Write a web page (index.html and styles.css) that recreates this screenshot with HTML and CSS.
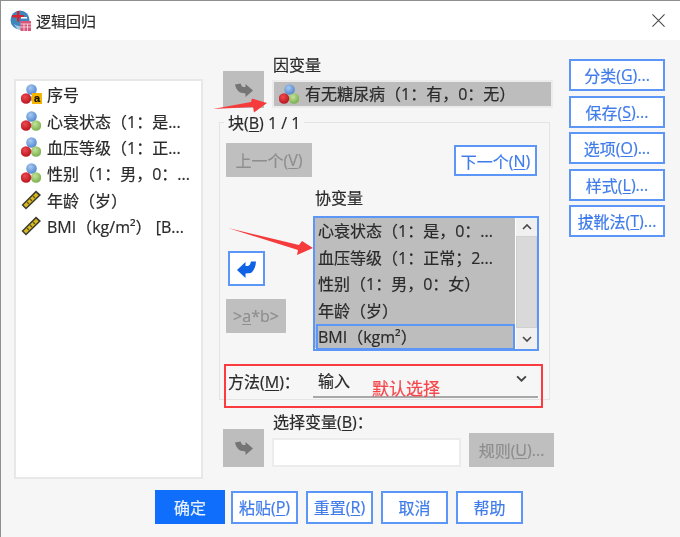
FILE: index.html
```html
<!DOCTYPE html>
<html lang="zh">
<head>
<meta charset="utf-8">
<title>逻辑回归</title>
<link rel="stylesheet" href="styles.css">
</head>
<body>
<svg width="0" height="0" class="defs">
  <defs>
    <radialGradient id="gb" cx=".4" cy=".35" r=".7"><stop offset="0" stop-color="#a9c9ef"/><stop offset="1" stop-color="#4c84cf"/></radialGradient>
    <radialGradient id="gg" cx=".4" cy=".35" r=".7"><stop offset="0" stop-color="#c4e29b"/><stop offset="1" stop-color="#76ad48"/></radialGradient>
    <radialGradient id="gr" cx=".4" cy=".35" r=".7"><stop offset="0" stop-color="#ee4a50"/><stop offset="1" stop-color="#b5121e"/></radialGradient>
    <symbol id="nominal" viewBox="0 0 20 20">
      <circle cx="10.500" cy="5.500" r="5.300" fill="url(#gb)"/>
      <circle cx="15" cy="14.500" r="5.200" fill="url(#gg)"/>
      <circle cx="5" cy="14.500" r="5.200" fill="url(#gr)"/>
    </symbol>
    <symbol id="ruler" viewBox="0 0 20 20">
      <path d="M0.500 15 L15 0.500 L20 5 L5 19.500 Z" fill="#3b3b2e"/>
      <path d="M2.500 15 L15 2.800 L17.600 5.200 L5 17.400 Z" fill="#d9b81e"/>
      <path d="M6 12 l2 2 M9 9 l2 2 M12 6 l2 2" stroke="#5a5320" stroke-width="1.200"/>
    </symbol>
    <symbol id="arrow-right" viewBox="0 0 18 14">
      <path d="M18 7.500 L10.500 1 L10.500 4 L8 4 Q6.500 3.500 5.500 .5 L0 1.500 Q1 7 5 9.500 L10.500 10.500 L10.500 14 Z" fill="#757575"/>
    </symbol>
    <symbol id="arrow-left" viewBox="0 0 19 18">
      <path d="M0 10 L8.500 2 L8.500 6 L11 6 Q13 5.500 14 1.500 L19 1.500 Q18.500 9.500 14 13 L8.500 13.500 L8.500 18 Z" fill="#0f62e6"/>
    </symbol>
  </defs>
</svg>

<div class="window">
  <header class="titlebar">
    <svg class="app-icon" viewBox="0 0 22 22" aria-hidden="true">
      <circle cx="10" cy="10" r="9.500" fill="#3f86bd"/>
      <path d="M4 14 Q10 19 17 12 L17 19 L7 19 Z" fill="#9cc6e2"/>
      <path d="M7 1 h2.400 v4 h4.400 v2.400 h-4.400 v4 h-2.400 v-4 h-5 v-2.400 h5 Z" fill="#d6232f"/>
      <rect x="10.500" y="11" width="10.500" height="10" fill="#d9567a"/>
      <path d="M10.500 14 h10.500 M10.500 17 h10.500 M14 14 v7 M17.500 14 v7" stroke="#f7d5df" stroke-width=".9"/>
      <path d="M11 7 h6 v1.600 h-6 Z" fill="#ffffff"/>
    </svg>
    <span class="title-text">逻辑回归</span>
    <svg class="close" viewBox="0 0 14 14" aria-hidden="true"><path d="M.5 .5 L13.500 13.500 M13.500 .5 L.5 13.500" stroke="#444" stroke-width="1.100"/></svg>
  </header>

  <main class="content">
    <ul class="sources">
      <li class="src-row"><span class="icon-wrap"><svg class="vicon"><use href="#nominal"/></svg><b class="a-tag">a</b></span>序号</li>
      <li class="src-row"><span class="icon-wrap"><svg class="vicon"><use href="#nominal"/></svg></span>心衰状态（1：是...</li>
      <li class="src-row"><span class="icon-wrap"><svg class="vicon"><use href="#nominal"/></svg></span>血压等级（1：正...</li>
      <li class="src-row"><span class="icon-wrap"><svg class="vicon"><use href="#nominal"/></svg></span>性别（1：男，0：...</li>
      <li class="src-row"><span class="icon-wrap"><svg class="vicon"><use href="#ruler"/></svg></span>年龄（岁）</li>
      <li class="src-row"><span class="icon-wrap"><svg class="vicon"><use href="#ruler"/></svg></span>BMI（kg/m²） [B...</li>
    </ul>

    <section class="center">
      <div class="dep">
        <button class="move move-dep"><svg class="move-arrow"><use href="#arrow-right"/></svg></button>
        <div class="dep-col">
          <div class="label">因变量</div>
          <div class="dep-box">
            <div class="dep-inner"><svg class="vicon"><use href="#nominal"/></svg><span>有无糖尿病（1：有，0：无）</span></div>
          </div>
        </div>
      </div>

      <div class="group">
        <div class="legend">块(<u>B</u>) 1 / 1</div>
        <div class="nav-row">
          <button class="btn-disabled btn-prev">上一个(<u>V</u>)</button>
          <button class="btn btn-next">下一个(<u>N</u>)</button>
        </div>
        <div class="cov">
          <div class="cov-tools">
            <button class="move-active"><svg class="move-arrow-b"><use href="#arrow-left"/></svg></button>
            <button class="btn-disabled btn-ab">&gt;<u>a</u>*b&gt;</button>
          </div>
          <div class="cov-main">
            <div class="label">协变量</div>
            <div class="listbox">
              <ul class="cov-list">
                <li class="cov-row">心衰状态（1：是，0：...</li>
                <li class="cov-row">血压等级（1：正常；2...</li>
                <li class="cov-row">性别（1：男，0：女）</li>
                <li class="cov-row">年龄（岁）</li>
                <li class="cov-row cov-selected">BMI（kgm²）</li>
              </ul>
              <div class="scrollbar">
                <div class="sb-btn sb-up"><svg class="chev-s" viewBox="0 0 10 6"><path d="M1 5 L5 1 L9 5" fill="none" stroke="#444" stroke-width="1.600"/></svg></div>
                <div class="sb-track"></div>
                <div class="sb-btn sb-down"><svg class="chev-s" viewBox="0 0 10 6"><path d="M1 1 L5 5 L9 1" fill="none" stroke="#444" stroke-width="1.600"/></svg></div>
              </div>
            </div>
          </div>
        </div>
        <div class="method">
          <div class="method-label">方法(<u>M</u>)：</div>
          <div class="combo"><span>输入</span><svg class="chev" viewBox="0 0 10 6"><path d="M1 1 L5 5 L9 1" fill="none" stroke="#444" stroke-width="1.700"/></svg></div>
        </div>
      </div>

      <div class="select">
        <button class="move move-sel"><svg class="move-arrow"><use href="#arrow-right"/></svg></button>
        <div class="select-col">
          <div class="label">选择变量(<u>B</u>)：</div>
          <div class="select-row">
            <div class="text-input"></div>
            <button class="btn-disabled btn-rule">规则(<u>U</u>)...</button>
          </div>
        </div>
      </div>
    </section>

    <aside class="side">
      <button class="btn btn-side">分类(<u>G</u>)...</button>
      <button class="btn btn-side">保存(<u>S</u>)...</button>
      <button class="btn btn-side">选项(<u>O</u>)...</button>
      <button class="btn btn-side">样式(<u>L</u>)...</button>
      <button class="btn btn-side">拔靴法(<u>T</u>)...</button>
    </aside>
  </main>

  <footer class="footer">
    <button class="btn-primary">确定</button>
    <button class="btn btn-foot">粘贴(<u>P</u>)</button>
    <button class="btn btn-foot">重置(<u>R</u>)</button>
    <button class="btn btn-foot">取消</button>
    <button class="btn btn-foot">帮助</button>
  </footer>

  <svg class="annot-arrows" viewBox="0 0 680 537" aria-hidden="true">
    <path d="M213 109 L251 102 L252 98.500 L267 103 L254 112.500 L253 107 Z" fill="#f53b3b"/>
    <path d="M228 228 L299 245 L302 241 L313 248 L297 255 L298 250 Z" fill="#f53b3b"/>
  </svg>
  <div class="annot-box"><span class="annot-text">默认选择</span></div>
</div>
</body>
</html>
```

FILE: styles.css
```css
* { box-sizing: border-box; }
html, body { margin: 0; padding: 0; }
body { background: #f6f6f6; font-family: "Open Sans", "Noto Sans CJK SC", sans-serif; font-size: 16px; color: #222; -webkit-text-stroke: 0.2px; }
.defs { position: absolute; }
ul { list-style: none; margin: 0; padding: 0; }
u { text-underline-offset: 2px; }
button { font: inherit; padding: 0; margin: 0; display: flex; align-items: center; justify-content: center; white-space: nowrap; }

.window { position: relative; width: 680px; height: 537px; background: #f6f6f6; border-top: 1px solid #8f8f8f; border-left: 1px solid #8f8f8f; overflow: hidden; filter: blur(0.35px); }

.titlebar { height: 39px; background: #fff; display: flex; align-items: center; padding-left: 9px; }
.app-icon { width: 22px; height: 22px; }
.title-text { margin-left: 4px; font-size: 15px; color: #2a2a2a; }
.close { width: 13px; height: 13px; margin-left: auto; margin-right: 15px; }

.content { display: flex; align-items: flex-start; padding-left: 13px; height: 440px; }

.sources { width: 189px; height: 400px; margin-top: 39px; background: #fff; border: 2px solid #e8e8e8; padding: 0 0 0 5px; }
.src-row { height: 26.400px; display: flex; align-items: center; white-space: nowrap; color: #2a2a2a; }
.icon-wrap { position: relative; width: 20px; height: 20px; margin-right: 6px; flex: none; }
.vicon { width: 20px; height: 20px; display: block; flex: none; }
.a-tag { position: absolute; right: -1px; bottom: 0; width: 10px; height: 11px; background: #f4b400; color: #111; font: 700 11px/10px "Liberation Sans", sans-serif; text-align: center; }

.center { width: 336px; margin-left: 16px; }
.label { height: 20px; line-height: 20px; color: #2a2a2a; padding-left: 1px; white-space: nowrap; }

.dep { display: flex; margin-top: 15px; }
.move { width: 41px; background: #bdbdbd; border: none; margin-left: 4px; flex: none; }
.move-dep { height: 37px; margin-top: 16px; }
.move-arrow { width: 18px; height: 14px; }
.dep-col { margin-left: 8px; width: 281px; }
.dep-box { height: 28px; margin-top: 5px; border: 2px solid #ececec; }
.dep-inner { height: 24px; background: #bdbdbd; display: flex; align-items: center; padding-left: 5px; white-space: nowrap; color: #2a2a2a; line-height: 22px; }
.dep-inner .vicon { width: 20px; height: 20px; margin-right: 6px; }

.group { position: relative; width: 331px; height: 278px; margin-top: 14px; border: 1px solid #e4e4e4; padding: 20px 0 0 6px; }
.legend { position: absolute; left: 4px; top: -10px; height: 20px; line-height: 20px; background: #f6f6f6; padding: 0 4px; color: #2a2a2a; }

.nav-row { display: flex; justify-content: space-between; align-items: flex-start; padding-right: 12px; }
.btn { background: #fff; border: 2px solid #5c97f8; color: #3f7cea; }
.btn-disabled { background: #bfbfbf; border: none; color: #8e8e8e; }
.btn-prev { width: 86px; height: 34px; }
.btn-next { width: 83px; height: 31px; margin-top: 2px; }

.cov { display: flex; }
.cov-tools { width: 87px; padding-top: 74px; }
.move-active { width: 37px; height: 35px; margin-left: 2px; background: #fff; border: 2px solid #5c97f8; }
.move-arrow-b { width: 19px; height: 18px; }
.btn-ab { width: 60px; height: 34px; margin-top: 13px; }
.cov-main { padding-top: 11px; }
.cov-main .label { padding-left: 2px; }
.listbox { display: flex; width: 226px; height: 135px; margin-top: 8px; border: 2px solid #5c97f8; background: #fff; }
.cov-list { width: 201px; height: 130px; background: #bdbdbd; padding-left: 1px; }
.cov-row { height: 26.600px; padding-left: 2px; line-height: 26px; white-space: nowrap; color: #2a2a2a; }
.cov-selected { height: 26px; padding-left: 0; line-height: 23px; border: 2px solid #5c97f8; }

.scrollbar { width: 21px; display: flex; flex-direction: column; margin-left: 1px; }
.sb-btn { background: #f0f0f0; display: flex; align-items: center; justify-content: center; }
.sb-up { height: 18px; }
.sb-down { height: 21px; }
.sb-track { height: 92px; background: #d9d9d9; border: 1px solid #cfcfcf; }
.chev-s { width: 10px; height: 6px; }

.method { display: flex; margin-top: 13px; padding-left: 2px; height: 34px; }
.method-label { width: 85px; line-height: 36px; white-space: nowrap; color: #2a2a2a; }
.combo { width: 225px; height: 34px; border-bottom: 2px solid #a8a8a8; display: flex; align-items: center; justify-content: space-between; padding: 0 11px 0 5px; color: #2a2a2a; }
.chev { width: 11px; height: 7px; margin-top: -3px; }

.select { display: flex; margin-top: 12px; }
.move-sel { height: 38px; margin-top: 17px; }
.select-col { margin-left: 8px; }
.select-row { display: flex; align-items: flex-end; margin-top: 1px; height: 34px; }
.text-input { width: 189px; height: 29px; background: #fff; border: 2px solid #ececec; }
.btn-rule { width: 85px; height: 34px; margin-left: 8px; }

.side { width: 96px; margin-left: 14px; margin-top: 19px; display: flex; flex-direction: column; gap: 4.500px; }
.btn-side { width: 96px; height: 32px; }

.footer { display: flex; align-items: center; padding-left: 154px; height: 34px; margin-top: 10px; }
.btn-primary { width: 70px; height: 34px; background: #0f6ffc; border: none; color: #e8f0ff; }
.btn-foot { width: 67px; height: 33px; margin-left: 8px; }
.btn-foot:nth-child(2) { margin-left: 6px; }

.annot-arrows { position: absolute; left: -1px; top: -1px; width: 680px; height: 537px; pointer-events: none; }
.annot-box { position: absolute; left: 223px; top: 363px; width: 319px; height: 44px; border: 2px solid #fb3b40; pointer-events: none; }
.annot-text { position: absolute; left: 146px; top: 13px; font-size: 17px; line-height: 20px; color: #f5474b; white-space: nowrap; }
```
